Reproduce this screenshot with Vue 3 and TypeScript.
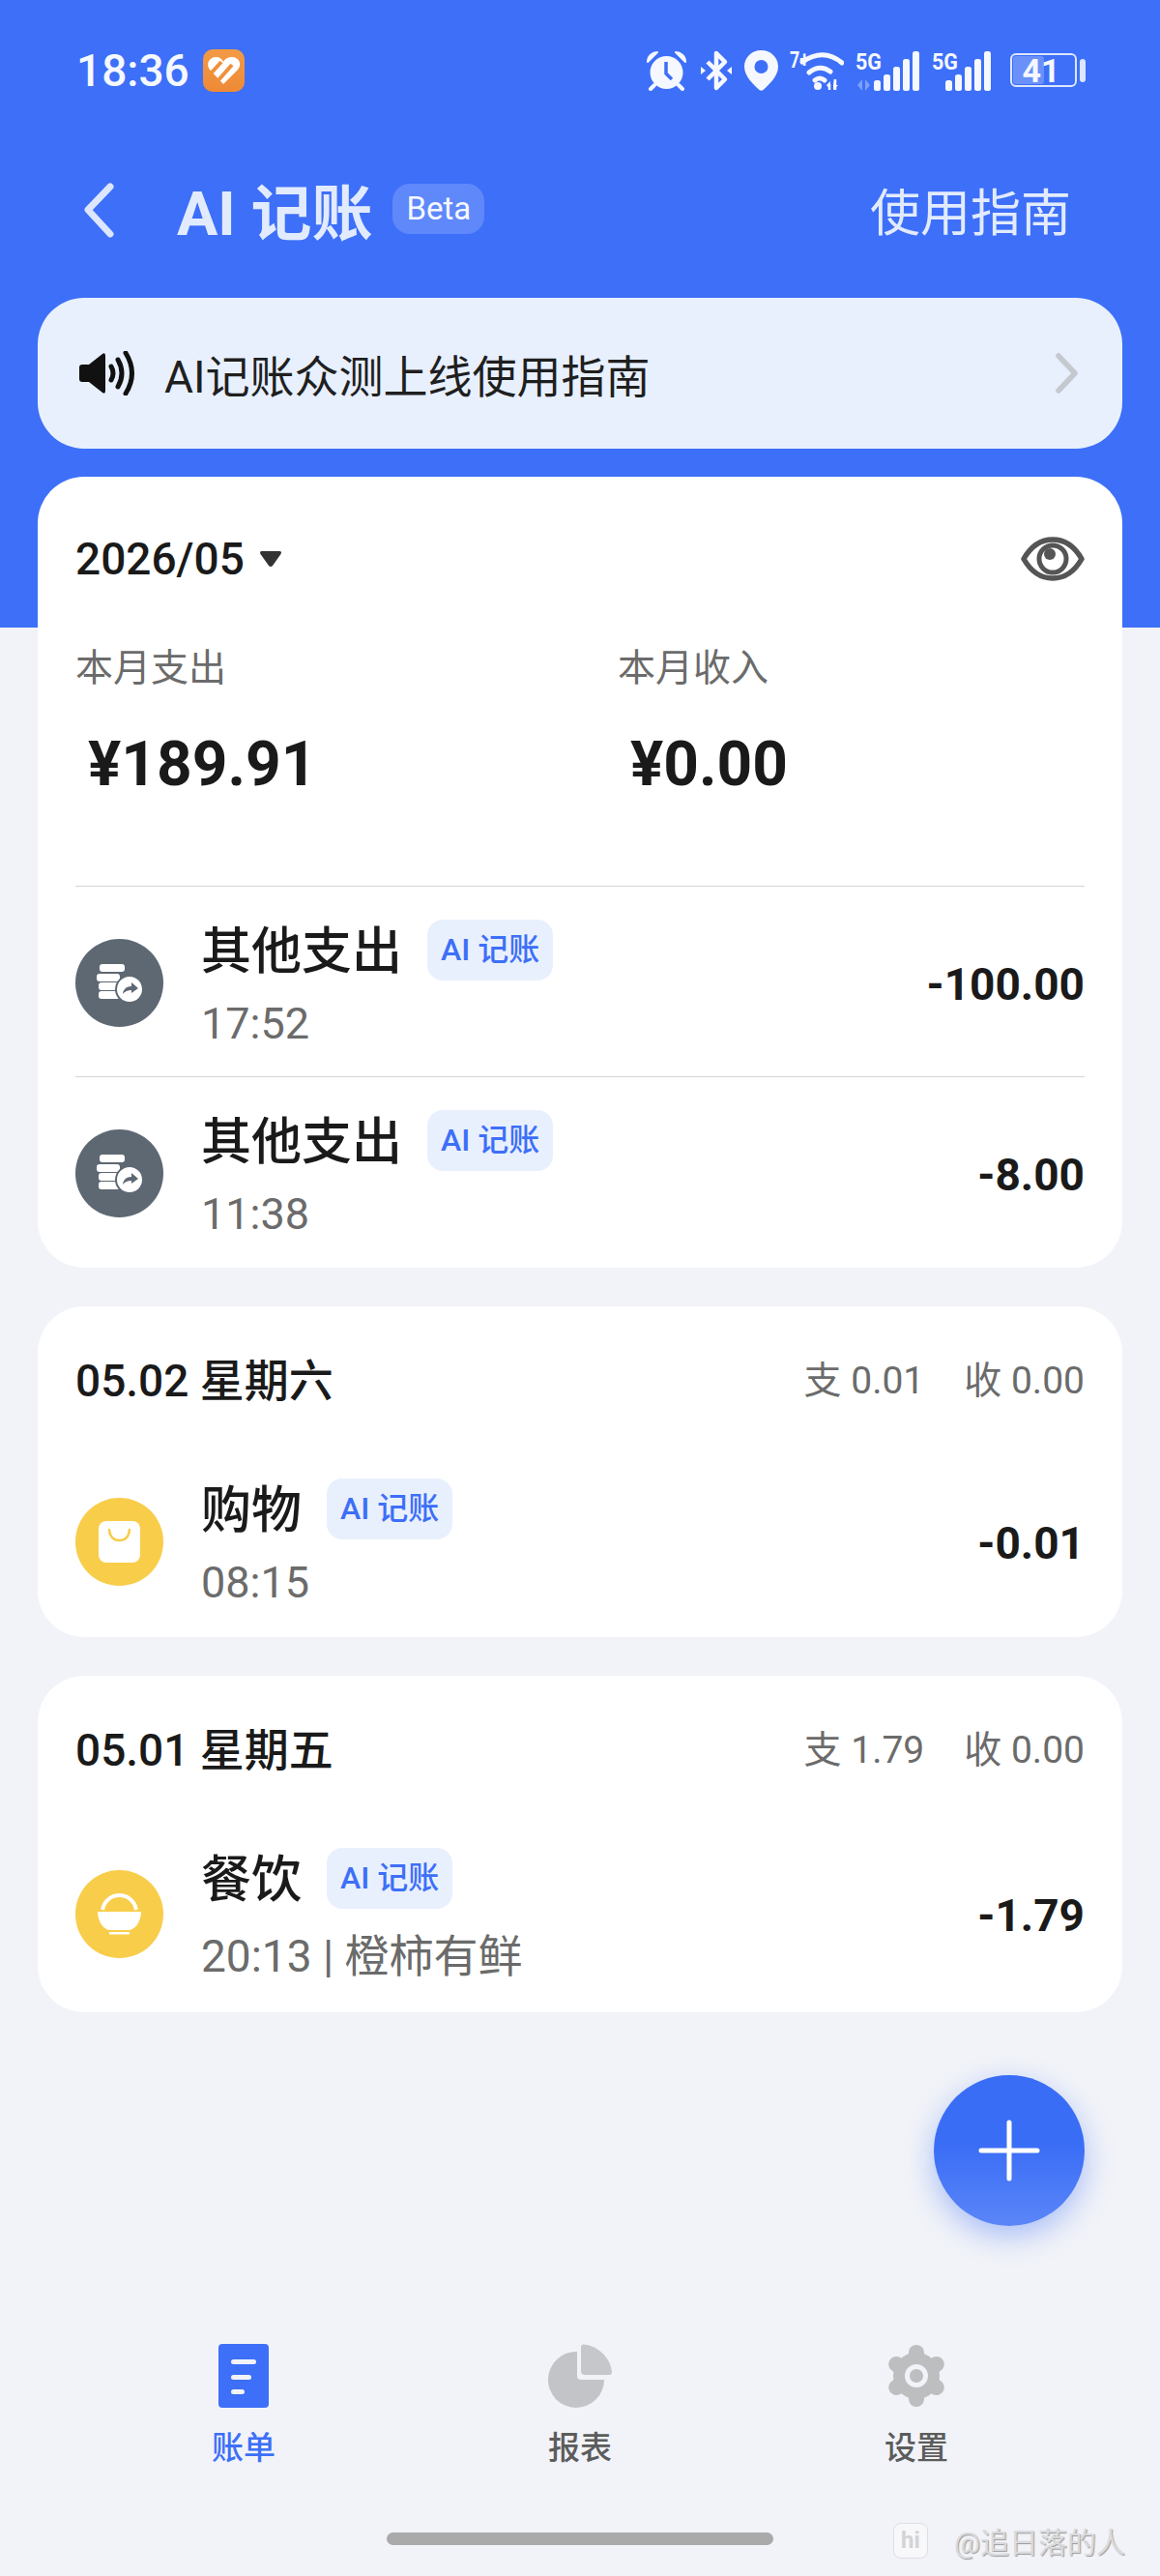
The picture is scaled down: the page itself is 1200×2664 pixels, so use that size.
<script setup lang="ts">
interface Bill {
  name: string
  sub: string
  amount: string
  icon: 'coins' | 'bag' | 'bowl'
  tall?: boolean
}

interface Day {
  date: string
  out: string
  income: string
  bills: Bill[]
}

const todayBills: Bill[] = [
  { name: '其他支出', sub: '17:52', amount: '-100.00', icon: 'coins' },
  { name: '其他支出', sub: '11:38', amount: '-8.00', icon: 'coins' },
]

const days: Day[] = [
  {
    date: '05.02 星期六',
    out: '支 0.01',
    income: '收 0.00',
    bills: [{ name: '购物', sub: '08:15', amount: '-0.01', icon: 'bag' }],
  },
  {
    date: '05.01 星期五',
    out: '支 1.79',
    income: '收 0.00',
    bills: [{ name: '餐饮', sub: '20:13 | 橙柿有鲜', amount: '-1.79', icon: 'bowl', tall: true }],
  },
]

const barHeights = [11, 17, 25, 33, 41]
</script>

<template>
  <div class="page">
    <!-- Status bar -->
    <div class="status">
      <div class="status-left">
        <span class="clock">18:36</span>
        <svg class="app-badge" width="43" height="44" viewBox="0 0 43 44">
          <defs>
            <linearGradient id="orange" x1="0" y1="0" x2="0" y2="1">
              <stop offset="0" stop-color="#F39A45" />
              <stop offset="1" stop-color="#EE8A36" />
            </linearGradient>
          </defs>
          <rect width="43" height="44" rx="10" fill="url(#orange)" />
          <path d="M21 36 L7 21 C2 14 8 7 14 8 C17 8 20 10 21 13 C23 9 27 8 30 8 C37 8 41 15 36 21 Z" fill="#fff" />
          <path d="M9 24 L19 13 M15 33 L30 16" stroke="#F0903B" stroke-width="4" fill="none" />
        </svg>
      </div>
      <div class="status-right">
        <!-- alarm -->
        <svg width="41" height="42" viewBox="0 0 41 42">
          <circle cx="20.5" cy="23" r="17" fill="#F5F8FF" />
          <path d="M20 12 V24 L26 30" stroke="#3D6FF8" stroke-width="3.5" fill="none" />
          <path d="M1 12 C1 6 6 2 11 2 Z M40 12 C40 6 35 2 30 2 Z" fill="#F5F8FF" stroke="#F5F8FF" stroke-width="2" stroke-linejoin="round" />
          <path d="M8 36 L4 40 M33 36 L37 40" stroke="#F5F8FF" stroke-width="4" stroke-linecap="round" />
        </svg>
        <!-- bluetooth -->
        <svg class="st-bt" width="32" height="44" viewBox="0 0 32 44">
          <path d="M7 13 L25 31 L16 40 V4 L25 13 L7 31" stroke="#F5F8FF" stroke-width="4.5" stroke-linejoin="round" fill="none" />
          <path d="M0 18 L5 22 L0 26 Z M32 18 L27 22 L32 26 Z" fill="#F5F8FF" />
        </svg>
        <!-- location -->
        <svg width="35" height="42" viewBox="0 0 35 42">
          <path fill-rule="evenodd" d="M17.5 0 C27.5 0 35 7.500 35 17 C35 27 25 36 19.500 41 Q17.500 42.500 15.500 41 C10 36 0 27 0 17 C0 7.500 7.500 0 17.500 0 Z M17.500 10 A7 7 0 1 0 17.500 24 A7 7 0 1 0 17.500 10 Z" fill="#F5F8FF" />
        </svg>
        <!-- wifi -->
        <svg class="st-tight" width="56" height="52" viewBox="0 -4 56 52">
          <text x="0" y="19" class="st-text st-small" textLength="20" lengthAdjust="spacingAndGlyphs">7+</text>
          <path d="M13 13 Q35 -2 54 14 M20 24 Q31 15 42 23 M26 32 Q31 28 36 32" stroke="#F5F8FF" stroke-width="5" stroke-linecap="round" fill="none" />
          <circle cx="29" cy="38" r="4" fill="#F5F8FF" />
          <path d="M42 42 V33 L38 37 Z M45 30 V42 L50 37 H46 Z" fill="#F5F8FF" />
          <path d="M41 36 V42 M47 31 V42" stroke="#F5F8FF" stroke-width="2.500" />
        </svg>
        <!-- signal 1 -->
        <svg class="st-tight" width="66" height="52" viewBox="0 -4 66 52">
          <text x="0" y="21" class="st-text st-small" textLength="27" lengthAdjust="spacingAndGlyphs">5G</text>
          <path d="M7 31 L2 37 L7 43 Z M10 31 L15 37 L10 43 Z" fill="#F5F8FF" opacity="0.35" />
          <rect v-for="(h, i) in barHeights" :key="i" :x="19 + i * 10" :y="43 - h" width="7" :height="h" rx="2.500" fill="#F5F8FF" />
        </svg>
        <!-- signal 2 -->
        <svg class="st-sig2" width="61" height="52" viewBox="0 -4 61 52">
          <text x="0" y="21" class="st-text st-small" textLength="27" lengthAdjust="spacingAndGlyphs">5G</text>
          <rect v-for="(h, i) in barHeights" :key="i" :x="14 + i * 10" :y="43 - h" width="7" :height="h" rx="2.500" fill="#F5F8FF" />
        </svg>
        <!-- battery -->
        <svg class="st-batt-icon" width="78" height="44" viewBox="0 -4 78 44">
          <rect x="1" y="1" width="67" height="33" rx="5" fill="none" stroke="#DCE6FE" stroke-width="2" />
          <rect x="3" y="3" width="32" height="29" rx="3" fill="#F5F8FF" opacity="0.25" />
          <text x="32" y="30" text-anchor="middle" class="st-text st-batt">41</text>
          <rect x="72" y="6" width="6" height="24" rx="3" fill="#DCE6FE" />
        </svg>
      </div>
    </div>

    <!-- Header -->
    <div class="header">
      <div class="header-left">
        <svg class="back" width="34" height="60" viewBox="0 0 34 60">
          <path d="M29 5 L6 29 L29 54" stroke="#DCE6FE" stroke-width="7" stroke-linecap="round" stroke-linejoin="round" fill="none" />
        </svg>
        <span class="title">AI 记账</span>
        <span class="beta">Beta</span>
      </div>
      <span class="guide">使用指南</span>
    </div>

    <!-- Notice -->
    <div class="notice">
      <svg width="60" height="46" viewBox="0 0 60 46">
        <path d="M4 14 H11 L25 3 Q28 1 28 5 V41 Q28 45 25 43 L11 32 H4 Q1 32 1 29 V17 Q1 14 4 14 Z" fill="#111" />
        <path d="M34 16 Q38 23 34 30 M41 9 Q49 23 41 37 M49 2 Q62 23 49 44" stroke="#111" stroke-width="5" stroke-linecap="round" fill="none" />
      </svg>
      <span class="notice-text">AI记账众测上线使用指南</span>
      <svg class="notice-arrow" width="24" height="42" viewBox="0 0 24 42">
        <path d="M3 3 L20 21 L3 39" stroke="#C5C9CF" stroke-width="5.500" stroke-linecap="round" stroke-linejoin="round" fill="none" />
      </svg>
    </div>

    <!-- Month summary -->
    <div class="card summary">
      <div class="month-row">
        <div class="month">
          <span>2026/05</span>
          <svg width="24" height="18" viewBox="0 0 24 18">
            <path d="M3 1 H21 Q24 1 22.500 4 L14 16 Q12 18 10 16 L1.500 4 Q0 1 3 1 Z" fill="#333" />
          </svg>
        </div>
        <svg width="66" height="46" viewBox="0 0 66 46">
          <path d="M3 23 C11 9 22 3 33 3 C44 3 55 9 63 23 C55 37 44 43 33 43 C22 43 11 37 3 23 Z" stroke="#555" stroke-width="5.500" stroke-linejoin="round" fill="none" />
          <circle cx="33" cy="23" r="14" stroke="#555" stroke-width="5" fill="none" />
          <circle cx="30" cy="18" r="6" fill="#555" />
        </svg>
      </div>
      <div class="totals">
        <div>
          <div class="total-label">本月支出</div>
          <div class="total-value">¥189.91</div>
        </div>
        <div>
          <div class="total-label">本月收入</div>
          <div class="total-value">¥0.00</div>
        </div>
      </div>
      <div v-for="(bill, i) in todayBills" :key="i" class="bill with-line">
        <svg class="bill-icon" width="91" height="91" viewBox="0 0 91 91">
          <circle cx="45.500" cy="45.500" r="45.500" fill="#5E6873" />
          <rect x="25" y="26" width="26" height="8" rx="3" fill="#fff" />
          <rect x="22" y="36" width="24" height="8" rx="3" fill="#fff" />
          <rect x="24" y="45" width="22" height="8" rx="3" fill="#fff" />
          <rect x="24" y="54" width="22" height="8" rx="3" fill="#fff" />
          <circle cx="56" cy="52" r="14" fill="#fff" stroke="#5E6873" stroke-width="2" />
          <path d="M49 57 Q50 49 58 49 V45 L65 51 L58 56 V53 Q52 53 49 57 Z" fill="#5E6873" />
        </svg>
        <div class="bill-main">
          <div class="bill-top">
            <span class="bill-name">{{ bill.name }}</span>
            <span class="ai-tag">AI 记账</span>
          </div>
          <div class="bill-sub">{{ bill.sub }}</div>
        </div>
        <span class="bill-amount">{{ bill.amount }}</span>
      </div>
    </div>

    <!-- Earlier days -->
    <div v-for="day in days" :key="day.date" class="card day">
      <div class="day-head">
        <span class="day-date">{{ day.date }}</span>
        <div class="day-sums">
          <span>{{ day.out }}</span>
          <span>{{ day.income }}</span>
        </div>
      </div>
      <div v-for="bill in day.bills" :key="bill.name" class="bill" :class="{ tall: bill.tall }">
        <svg v-if="bill.icon === 'bag'" class="bill-icon" width="91" height="91" viewBox="0 0 91 91">
          <circle cx="45.500" cy="45.500" r="45.500" fill="#F8CD4A" />
          <rect x="24" y="24" width="43" height="43" rx="8" fill="#fff" />
          <path d="M35 33 Q36 44 45.500 44 Q55 44 56 33" stroke="#F8CD4A" stroke-width="2.500" stroke-linecap="round" fill="none" />
        </svg>
        <svg v-else class="bill-icon" width="91" height="91" viewBox="0 0 91 91">
          <circle cx="45.500" cy="45.500" r="45.500" fill="#F8CD4A" />
          <path d="M28 41 C30 31 38 26 45.500 26 C53 26 61 31 63 41" stroke="#fff" stroke-width="4" fill="none" />
          <path d="M23 43 H68 C68 54 61 62 55 62 H36 C30 62 23 54 23 43 Z" fill="#fff" />
          <rect x="35" y="64" width="21" height="2.500" fill="#fff" />
        </svg>
        <div class="bill-main">
          <div class="bill-top">
            <span class="bill-name">{{ bill.name }}</span>
            <span class="ai-tag">AI 记账</span>
          </div>
          <div class="bill-sub">{{ bill.sub }}</div>
        </div>
        <span class="bill-amount">{{ bill.amount }}</span>
      </div>
    </div>

    <!-- Tabs -->
    <div class="tabs">
      <div class="tab active">
        <svg width="66" height="66" viewBox="0 0 66 66">
          <rect x="7" y="0" width="52" height="66" rx="4" fill="#3D6FF8" />
          <rect x="20" y="16" width="26" height="5" rx="2.500" fill="#F1F3F8" />
          <rect x="20" y="32" width="21" height="5" rx="2.500" fill="#F1F3F8" />
          <rect x="20" y="47" width="14" height="5" rx="2.500" fill="#F1F3F8" />
        </svg>
        <span>账单</span>
      </div>
      <div class="tab">
        <svg width="66" height="66" viewBox="0 0 66 66">
          <path d="M30 8 V33 Q30 37 34 37 H58 A29 29 0 1 1 30 8 Z" fill="#C3C4C7" />
          <path d="M34 3 Q34 0 37 0.500 C52 2 65 15 66 29 Q66 32 63 32 H38 Q34 32 34 28 Z" fill="#C6C7CA" />
        </svg>
        <span>报表</span>
      </div>
      <div class="tab">
        <svg width="66" height="66" viewBox="0 0 66 66">
          <g fill="#BDBEC0">
            <rect x="25" y="1" width="16" height="64" rx="8" />
            <rect x="25" y="1" width="16" height="64" rx="8" transform="rotate(60 33 33)" />
            <rect x="25" y="1" width="16" height="64" rx="8" transform="rotate(120 33 33)" />
            <circle cx="33" cy="33" r="24" />
          </g>
          <circle cx="33" cy="33" r="9.500" fill="none" stroke="#F1F3F8" stroke-width="5" />
        </svg>
        <span>设置</span>
      </div>
    </div>

    <div class="home-bar" />

    <!-- Floating add -->
    <div class="fab">
      <svg width="64" height="64" viewBox="0 0 64 64">
        <path d="M32 3 V61 M3 32 H61" stroke="#fff" stroke-width="5" stroke-linecap="round" />
      </svg>
    </div>

    <!-- Watermark -->
    <div class="watermark">
      <span class="wm-logo">hi</span>
      <span class="wm-text">@追日落的人</span>
    </div>
  </div>
</template>

<style scoped>
.page {
  position: relative;
  width: 1200px;
  height: 2664px;
  overflow: hidden;
  background: linear-gradient(#3D6FF8 649px, #F1F3F8 649px);
  font-family: Roboto, "Noto Sans CJK SC", sans-serif;
  color: #1a1a1a;
}

.status {
  display: flex;
  align-items: center;
  justify-content: space-between;
  height: 46px;
  padding: 50px 77px 0 79px;
}
.status-left {
  display: flex;
  align-items: center;
  gap: 14px;
}
.clock {
  font-size: 46px;
  font-weight: 500;
  line-height: 46px;
  color: #F5F8FF;
}
.status-right {
  display: flex;
  align-items: center;
  gap: 12px;
}
.st-bt {
  margin-left: 3px;
}
.st-bt + svg {
  margin-left: 1px;
}
.st-sig2 {
  margin-left: 1px;
}
.st-batt-icon {
  margin-left: 8px;
}
.st-text {
  font-family: Roboto, sans-serif;
  fill: #F5F8FF;
  font-weight: 700;
}
.st-small {
  font-size: 24px;
}
.st-batt {
  font-size: 34px;
}

.header {
  display: flex;
  align-items: center;
  justify-content: space-between;
  height: 60px;
  margin-top: 96px;
  padding: 0 92px 0 85px;
}
.header-left {
  display: flex;
  align-items: center;
}
.back {
  margin-top: -9px;
  margin-right: 64px;
}
.title {
  font-size: 63px;
  font-weight: 700;
  line-height: 60px;
  color: #E2EBFE;
}
.beta {
  margin-left: 21px;
  margin-top: -12px;
  padding: 0 14px;
  height: 52px;
  line-height: 52px;
  border-radius: 18px;
  background: #5F88FA;
  color: #F5F8FF;
  font-size: 33px;
}
.guide {
  font-size: 52px;
  line-height: 60px;
  color: #E2EBFE;
}

.notice {
  display: flex;
  align-items: center;
  height: 156px;
  margin: 56px 39px 0;
  padding: 0 45px 0 42px;
  border-radius: 48px;
  background: #E8F0FE;
}
.notice-text {
  margin-left: 29px;
  font-size: 46px;
  color: #1f1f1f;
}
.notice-arrow {
  margin-left: auto;
}

.card {
  margin: 0 39px;
  background: #fff;
  border-radius: 48px;
}
.summary {
  margin-top: 29px;
  padding: 55px 39px 1px;
}
.month-row {
  display: flex;
  align-items: center;
  justify-content: space-between;
  height: 60px;
}
.month {
  display: flex;
  align-items: center;
  gap: 15px;
  font-size: 46px;
  font-weight: 500;
}
.totals {
  display: grid;
  grid-template-columns: 561px 1fr;
  margin-top: 58px;
  margin-bottom: 92px;
}
.total-label {
  font-size: 39px;
  line-height: 50px;
  color: #6b6b6b;
}
.total-value {
  height: 68px;
  margin-top: 40px;
  padding-left: 13px;
  font-size: 64px;
  font-weight: 700;
  line-height: 70px;
}

.bill {
  display: flex;
  align-items: center;
  padding: 33px 0 31px;
}
.bill.with-line {
  border-top: 1px solid #D5D5D7;
}
.bill-icon {
  flex-shrink: 0;
  margin-right: 39px;
}
.bill-main {
  flex: 1;
}
.bill-top {
  display: flex;
  align-items: center;
  gap: 26px;
  height: 64px;
}
.bill-name {
  margin-top: 6px;
  font-size: 52px;
  font-weight: 500;
  line-height: 64px;
}
.ai-tag {
  height: 63px;
  padding: 0 14px;
  border-radius: 16px;
  background: #E9F0FD;
  color: #3D6FF8;
  font-size: 32px;
  font-weight: 500;
  line-height: 63px;
}
.bill-sub {
  margin-top: 22px;
  font-size: 45px;
  line-height: 46px;
  color: #6b6b6b;
}
.bill.tall .bill-sub {
  margin-top: 24px;
  font-size: 46px;
  line-height: 50px;
}
.bill-amount {
  margin-top: 4px;
  font-size: 46px;
  font-weight: 700;
}

.day {
  margin-top: 40px;
  padding: 0 39px 2px;
}
.day-head {
  display: flex;
  align-items: center;
  justify-content: space-between;
  padding: 47px 0 37px;
  line-height: 60px;
}
.day-date {
  font-size: 46px;
  font-weight: 500;
}
.day-sums {
  display: flex;
  gap: 41px;
  font-size: 39px;
  color: #6b6b6b;
}

.tabs {
  display: grid;
  grid-template-columns: repeat(3, 1fr);
  margin-top: 343px;
  padding: 0 78px;
}
.tab {
  display: flex;
  flex-direction: column;
  align-items: center;
  gap: 22px;
  font-size: 33px;
  font-weight: 500;
  line-height: 40px;
  color: #5c5c5c;
}
.tab.active {
  color: #3D6FF8;
}

.home-bar {
  width: 400px;
  height: 13px;
  margin: 67px auto 0;
  border-radius: 7px;
  background: #A9AAA9;
}

.fab {
  position: absolute;
  top: 2146px;
  left: 966px;
  display: flex;
  align-items: center;
  justify-content: center;
  width: 156px;
  height: 156px;
  border-radius: 50%;
  background: linear-gradient(#3A6DF6 45%, #5B86F8);
  box-shadow: 0 10px 30px rgba(61, 111, 248, 0.4);
}

.watermark {
  position: absolute;
  top: 2609px;
  left: 924px;
  display: flex;
  align-items: center;
  gap: 27px;
  height: 37px;
}
.wm-logo {
  width: 36px;
  height: 37px;
  border: 1px solid #DDDEE2;
  border-radius: 8px;
  background: #F8F8FA;
  box-sizing: border-box;
  text-align: center;
  color: #D2D3D6;
  font-size: 24px;
  font-weight: 700;
  line-height: 34px;
}
.wm-text {
  margin-top: 4px;
  font-size: 30px;
  line-height: 37px;
  color: #DADBDE;
  text-shadow: 1px 1px 1px #9b9b9b;
}
</style>
